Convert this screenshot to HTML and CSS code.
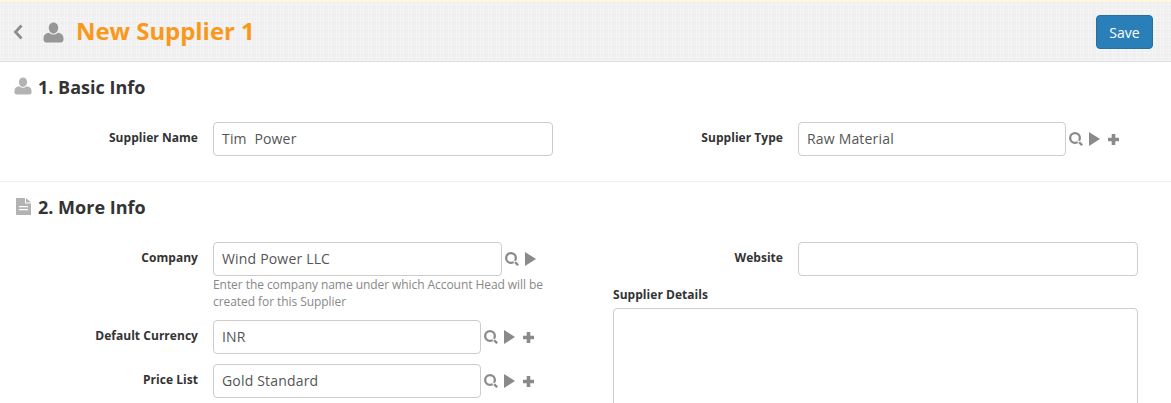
FILE: index.html
```html
<!DOCTYPE html>
<html lang="en">
<head>
<meta charset="utf-8">
<title>New Supplier 1</title>
<link rel="stylesheet" href="styles.css">
</head>
<body>
<svg class="defs" width="0" height="0" aria-hidden="true">
  <symbol id="user" viewBox="0 0 20 20"><path d="M10 0.5c2.7 0 4.5 2.200 4.500 5s-1.800 5.500-4.500 5.500-4.500-2.700-4.500-5.500 1.800-5 4.500-5zM5.700 10.300c1.100 1 2.600 1.700 4.300 1.700s3.200-.7 4.300-1.700c2.700.3 5.200 2 5.200 5.200v1.500c0 1.500-1.100 2.500-2.600 2.500H3.100C1.600 19.500.5 18.500.5 17v-1.500c0-3.200 2.500-4.900 5.200-5.200z"/></symbol>
  <symbol id="search" viewBox="0 0 14 14"><path fill-rule="evenodd" d="M6 0a6 6 0 1 1 0 12A6 6 0 0 1 6 0zm0 2.300a3.700 3.700 0 1 0 0 7.400 3.700 3.700 0 0 0 0-7.400zM9.800 8.200l4.200 4.200-1.700 1.600-4.200-4.200z"/></symbol>
  <symbol id="play" viewBox="0 0 12 14" preserveAspectRatio="none"><path d="M0 0l12 7-12 7z"/></symbol>
  <symbol id="plus" viewBox="0 0 11 11"><path d="M3.700 0h3.600v3.700H11v3.600H7.300V11H3.700V7.300H0V3.700h3.700z"/></symbol>
  <symbol id="file" viewBox="0 0 15 17"><path fill-rule="evenodd" d="M0 0h9v5.500h6V17H0zM3 8v1.300h9V8zm0 3v1.300h9V11zM10 0l5 4.500h-5z"/></symbol>
</svg>

<header class="page-head">
  <div class="head-title">
    <svg class="back" viewBox="0 0 10 16"><path d="M8.500 1.500L2.500 8 8.500 14.500" /></svg>
    <svg class="head-user"><use href="#user"/></svg>
    <h1>New Supplier 1</h1>
  </div>
  <button class="save" type="button">Save</button>
</header>

<section class="section basic">
  <h2><svg class="sec-user"><use href="#user"/></svg>1. Basic Info</h2>
  <div class="columns">
    <div class="field">
      <label>Supplier Name</label>
      <div class="control"><div class="input w340">Tim&nbsp; Power</div></div>
    </div>
    <div class="field">
      <label>Supplier Type</label>
      <div class="control">
        <div class="input w268">Raw Material</div>
        <span class="tools"><svg class="i-search"><use href="#search"/></svg><svg class="i-play"><use href="#play"/></svg><svg class="i-plus"><use href="#plus"/></svg></span>
      </div>
    </div>
  </div>
</section>

<section class="section more">
  <h2><svg class="sec-file"><use href="#file"/></svg>2. More Info</h2>
  <div class="columns">
    <div class="stack">
      <div class="field">
        <label>Company</label>
        <div class="control-wrap">
          <div class="control">
            <div class="input w289">Wind Power LLC</div>
            <span class="tools"><svg class="i-search"><use href="#search"/></svg><svg class="i-play"><use href="#play"/></svg></span>
          </div>
          <p class="help">Enter the company name under which Account Head will be created for this Supplier</p>
        </div>
      </div>
      <div class="field">
        <label>Default Currency</label>
        <div class="control">
          <div class="input w268">INR</div>
          <span class="tools"><svg class="i-search"><use href="#search"/></svg><svg class="i-play"><use href="#play"/></svg><svg class="i-plus"><use href="#plus"/></svg></span>
        </div>
      </div>
      <div class="field">
        <label>Price List</label>
        <div class="control">
          <div class="input w268">Gold Standard</div>
          <span class="tools"><svg class="i-search"><use href="#search"/></svg><svg class="i-play"><use href="#play"/></svg><svg class="i-plus"><use href="#plus"/></svg></span>
        </div>
      </div>
    </div>
    <div class="stack right">
      <div class="field">
        <label>Website</label>
        <div class="control"><div class="input w340"></div></div>
      </div>
      <div class="details">
        <label>Supplier Details</label>
        <div class="textarea"></div>
      </div>
    </div>
  </div>
</section>
</body>
</html>
```
FILE: styles.css
```css
* { box-sizing: border-box; }
html, body { margin: 0; height: 403px; overflow: hidden; }
body { font-family: "Open Sans", sans-serif; color: #333; background: #fff; }
.defs { position: absolute; }

.page-head {
  height: 62px;
  display: flex;
  align-items: center;
  justify-content: space-between;
  padding: 1px 18px 0 13px;
  border-top: 2px solid #fdf6df;
  border-bottom: 1px solid #ddd;
  background-color: #efefef;
  background-image:
    repeating-linear-gradient(0deg, rgba(255,255,255,.3) 0 1px, transparent 1px 3px, rgba(255,255,255,.3) 3px 4px, transparent 4px 8px),
    repeating-linear-gradient(90deg, rgba(255,255,255,.3) 0 1px, transparent 1px 3px, rgba(255,255,255,.3) 3px 4px, transparent 4px 8px);
}
.head-title { display: flex; align-items: center; }
.back { width: 10px; height: 16px; fill: none; stroke: #8d8d8d; stroke-width: 2.8; margin-right: 20px; }
.head-user { width: 21px; height: 21px; fill: #979797; margin-right: 12px; }
h1 { margin: 0; font-size: 24px; line-height: 32px; font-weight: 700; color: #f9991b; letter-spacing: -.06px; position: relative; top: -1px; }
.save {
  width: 57px; height: 34px; padding: 0;
  font: 14px "Open Sans", sans-serif; color: #fff;
  background: #2a7fb8; border: 1px solid #26709f; border-radius: 4px;
}

.section { padding: 0 0 0 15px; }
.basic { height: 120px; border-bottom: 1px solid #eee; }
.section h2 {
  display: flex; align-items: center;
  margin: 0; padding-top: 3px; height: 47px;
  font-size: 18px; line-height: 24px; font-weight: 700; color: #333;
}
.more h2 { padding: 3px 0 13px; height: 60px; }
.basic .columns { padding-top: 13px; }
.sec-user { width: 18px; height: 18px; fill: #b3b3b3; margin: 0 6px 0 -1px; position: relative; top: -1px; }
.sec-file { width: 15px; height: 17px; fill: #b3b3b3; margin: 0 7px 0 1px; position: relative; top: -1px; }

.columns { display: flex; }
.columns > .field, .stack { width: 585px; flex: none; }
.stack { display: flex; flex-direction: column; gap: 10px; }
.right { gap: 0; }

.field { display: flex; align-items: flex-start; }
.field label {
  flex: none; width: 183px; padding-top: 7px;
  text-align: right; font-size: 12px; line-height: 18px; font-weight: 700; color: #333; letter-spacing: .04px;
}
.control-wrap { margin-left: 15px; }
.field > .control { margin-left: 15px; }
.control { display: flex; align-items: center; }
.input {
  height: 34px; padding: 0 8px;
  border: 1px solid #ccc; border-radius: 4px;
  font-size: 14px; line-height: 32px; color: #555; background: #fff; letter-spacing: .18px;
}
.w340 { width: 340px; }
.w268 { width: 268px; }
.w289 { width: 289px; }

.tools { display: flex; align-items: center; margin-left: 3px; }
.tools svg { fill: #8a8a8a; }
.i-search { width: 14px; height: 14px; margin-right: 6px; }
.i-play { width: 11px; height: 14px; margin-right: 8px; fill: #909090; }
.i-plus { width: 11px; height: 11px; }

.help { margin: 0; width: 340px; font-size: 12px; line-height: 17px; color: #888; letter-spacing: -.065px; }

.details { margin: 10px 0 0 0; padding-left: 13px; }
.right .field label { width: 170px; }
.stack.right .field { margin-left: 13px; }
.details label { display: block; font-size: 12px; line-height: 18px; font-weight: 700; color: #333; letter-spacing: .04px; }
.textarea { width: 525px; height: 200px; margin-top: 4px; border: 1px solid #ccc; border-radius: 4px; background: #fff; }
```
